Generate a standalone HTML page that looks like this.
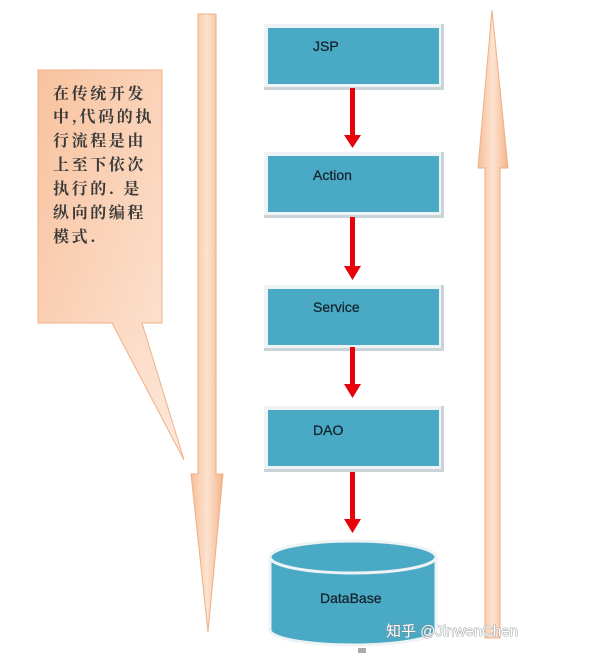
<!DOCTYPE html>
<html><head><meta charset="utf-8"><style>
html,body{margin:0;padding:0;background:#fff;width:608px;height:667px;overflow:hidden}
svg{display:block}
</style></head><body>
<svg width="608" height="667" viewBox="0 0 608 667" xmlns="http://www.w3.org/2000/svg">
<defs>
<linearGradient id="pe" x1="0" y1="0" x2="1" y2="1">
<stop offset="0" stop-color="#f8c29e"/><stop offset="1" stop-color="#fde9dc"/>
</linearGradient>
<linearGradient id="sh" x1="0" y1="0" x2="1" y2="0">
<stop offset="0" stop-color="#f6bf98"/><stop offset="0.5" stop-color="#fde3d0"/><stop offset="1" stop-color="#f3b48a"/>
</linearGradient>
</defs>
<path d="M38 70 H162 V323 H142 L184 460 L112 323 H38 Z" fill="url(#pe)" stroke="#f0b088" stroke-width="1"/>
<g font-family="'Noto Serif CJK SC','Liberation Serif',serif" font-size="16" font-weight="bold" fill="#3a3a3a" letter-spacing="2.6">
<text x="53" y="99">在传统开发</text>
<text x="53" y="122">中,代码的执</text>
<text x="53" y="146">行流程是由</text>
<text x="53" y="170">上至下依次</text>
<text x="53" y="194">执行的. 是</text>
<text x="53" y="218">纵向的编程</text>
<text x="53" y="242">模式.</text>
</g>
<path d="M198 14 H216 V474 H223 L208 632 L191 474 H198 Z" fill="url(#sh)" stroke="#efae85" stroke-width="1"/>
<path d="M492 10 L508 168 H500 V638 H485 V168 H478 Z" fill="url(#sh)" stroke="#efae85" stroke-width="1"/>
<g>
<rect x="264" y="24" width="180" height="66" fill="#c9d3d8"/>
<rect x="264" y="24" width="177" height="63" fill="#eef3f5"/>
<rect x="268" y="28" width="171" height="56" fill="#4aaac5"/>
<rect x="264" y="152" width="180" height="66" fill="#c9d3d8"/>
<rect x="264" y="152" width="177" height="63" fill="#eef3f5"/>
<rect x="268" y="156" width="171" height="56" fill="#4aaac5"/>
<rect x="264" y="285" width="180" height="66" fill="#c9d3d8"/>
<rect x="264" y="285" width="177" height="63" fill="#eef3f5"/>
<rect x="268" y="289" width="171" height="56" fill="#4aaac5"/>
<rect x="264" y="406" width="180" height="66" fill="#c9d3d8"/>
<rect x="264" y="406" width="177" height="63" fill="#eef3f5"/>
<rect x="268" y="410" width="171" height="56" fill="#4aaac5"/>
</g>
<g font-family="'Liberation Sans',sans-serif" font-size="14" fill="#152530" stroke="#152530" stroke-width="0.3">
<text x="313" y="51">JSP</text>
<text x="313" y="180">Action</text>
<text x="313" y="312">Service</text>
<text x="313" y="435">DAO</text>
</g>
<g fill="#e8000b">
<rect x="350" y="88" width="5" height="48"/><path d="M344 135 H361 L352.5 148 Z"/>
<rect x="350" y="217" width="5" height="50"/><path d="M344 266 H361 L352.5 280 Z"/>
<rect x="350" y="347" width="5" height="38"/><path d="M344 384 H361 L352.5 398 Z"/>
<rect x="350" y="472" width="5" height="48"/><path d="M344 519 H361 L352.5 533 Z"/>
</g>
<path d="M270 557 V630 A83 15 0 0 0 436 630 V557" fill="#4aaac5" stroke="#eef3f5" stroke-width="3"/>
<ellipse cx="353" cy="557" rx="83" ry="16" fill="#4aaac5" stroke="#eef3f5" stroke-width="3"/>
<rect x="358" y="648" width="8" height="5" fill="#aaa"/>
<text x="320" y="603" font-family="'Liberation Sans',sans-serif" font-size="14" fill="#152530" stroke="#152530" stroke-width="0.3">DataBase</text>
<text x="386" y="636" font-family="'Liberation Sans','Noto Sans CJK SC',sans-serif" font-size="15" fill="#fff" stroke="#7f8a8f" stroke-width="0.8" paint-order="stroke">知乎 @JinwenChen</text>
</svg>
</body></html>
